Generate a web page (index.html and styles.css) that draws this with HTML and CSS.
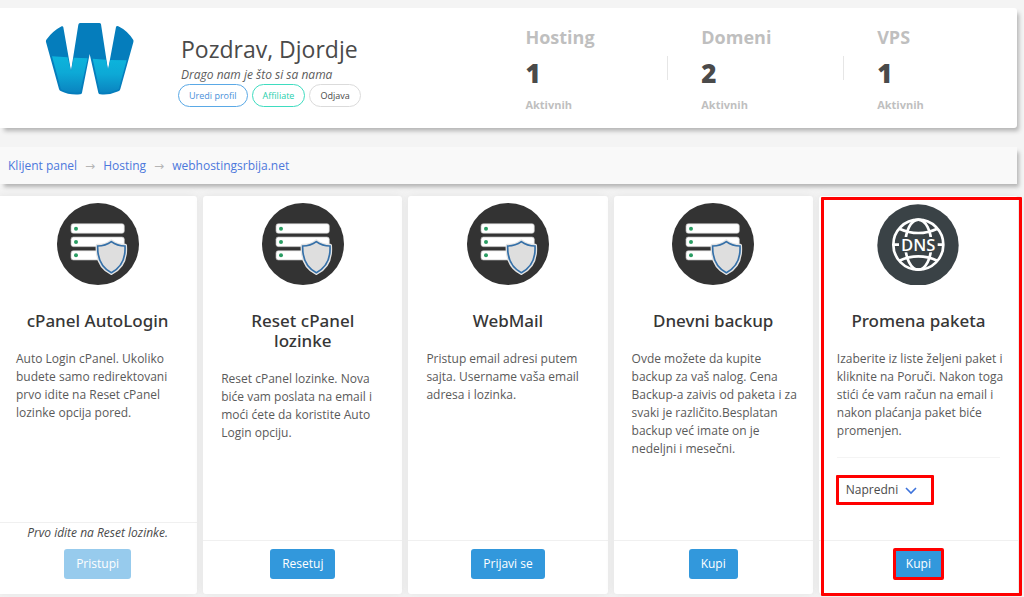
FILE: index.html
```html
<!DOCTYPE html>
<html lang="sr-Latn">
<head>
<meta charset="utf-8">
<meta name="viewport" content="width=device-width, initial-scale=1">
<title>Klijent panel</title>
<link rel="stylesheet" href="styles.css">
</head>
<body>
<svg class="defs" aria-hidden="true">
  <defs>
    <linearGradient id="water" x1="0" y1="0" x2="0" y2="1">
      <stop offset="0" stop-color="#0cb4dc"/>
      <stop offset=".45" stop-color="#0da9d6"/>
      <stop offset="1" stop-color="#0a84c0"/>
    </linearGradient>
    <symbol id="server" viewBox="20 15 246 246">
      <circle cx="143" cy="138" r="123" fill="#333"/>
      <g fill="#fff" stroke="#b5b5b5" stroke-width="2">
        <rect x="62" y="77" width="160" height="29" rx="7"/>
        <rect x="62" y="117" width="160" height="29" rx="7"/>
        <rect x="62" y="158" width="160" height="28" rx="7"/>
      </g>
      <g fill="#2a9d63"><circle cx="77" cy="92" r="6"/><circle cx="77" cy="132" r="6"/><circle cx="77" cy="172" r="6"/></g>
      <path d="M183 129C171 139 155 143 141 142C139 178 150 210 183 226C216 210 228 178 225 142C210 143 195 139 183 129Z" fill="#fff" stroke="#e4e4e4" stroke-width="10" stroke-linejoin="round"/>
      <path d="M183 131C171 140 155 144 142 144C141 178 152 208 183 224C214 208 226 178 224 144C210 144 195 140 183 131Z" fill="#dedede" stroke="#3570a8" stroke-width="5"/>
    </symbol>
  </defs>
</svg>
<main class="page">
  <header class="panel welcome">
    <svg class="logo" viewBox="0 0 300 270" role="img" aria-label="W">
      <path d="M120 24L178 24Q182 24 183 28L204 165L228 36Q230 31 235 34Q262 47 280 75Q281 78 280 82L241 222Q240 227 235 229Q209 241 181 238Q176 238 175 233L149 117L126 233Q125 238 120 238Q88 241 62 228Q58 226 57 222L18 81Q17 77 19 74Q38 48 65 34Q69 32 70 37L93 168L115 29Q116 24 120 24Z" fill="#057dbc"/>
      <path d="M36 124L83 127L93 168L101 128L143 130L120 232Q88 236 63 223Z" fill="url(#water)"/>
      <path d="M158 131L198 134L204 165L211 135L260 136L236 223Q208 236 180 232Z" fill="url(#water)"/>
    </svg>
    <div class="greeting">
      <h1>Pozdrav, Djordje</h1>
      <p>Drago nam je što si sa nama</p>
      <nav class="pills">
        <a class="pill blue" href="#">Uredi profil</a>
        <a class="pill green" href="#">Affiliate</a>
        <a class="pill" href="#">Odjava</a>
      </nav>
    </div>
    <div class="stats">
      <section class="stat"><h2>Hosting</h2><strong>1</strong><span>Aktivnih</span></section>
      <section class="stat"><h2>Domeni</h2><strong>2</strong><span>Aktivnih</span></section>
      <section class="stat"><h2>VPS</h2><strong>1</strong><span>Aktivnih</span></section>
    </div>
  </header>

  <nav class="panel crumbs">
    <a href="#">Klijent panel</a><span>→</span><a href="#">Hosting</a><span>→</span><a href="#">webhostingsrbija.net</a>
  </nav>

  <div class="cards">
    <article class="card">
      <svg class="icon"><use href="#server"/></svg>
      <h3>cPanel AutoLogin</h3>
      <p class="text">Auto Login cPanel. Ukoliko budete samo redirektovani prvo idite na Reset cPanel lozinke opcija pored.</p>
      <footer><em>Prvo idite na Reset lozinke.</em><button class="btn" disabled>Pristupi</button></footer>
    </article>
    <article class="card">
      <svg class="icon"><use href="#server"/></svg>
      <h3>Reset cPanel lozinke</h3>
      <p class="text">Reset cPanel lozinke. Nova biće vam poslata na email i moći ćete da koristite Auto Login opciju.</p>
      <footer><button class="btn">Resetuj</button></footer>
    </article>
    <article class="card">
      <svg class="icon"><use href="#server"/></svg>
      <h3>WebMail</h3>
      <p class="text">Pristup email adresi putem sajta. Username vaša email adresa i lozinka.</p>
      <footer><button class="btn">Prijavi se</button></footer>
    </article>
    <article class="card">
      <svg class="icon"><use href="#server"/></svg>
      <h3>Dnevni backup</h3>
      <p class="text">Ovde možete da kupite backup za vaš nalog. Cena Backup-a zaivis od paketa i za svaki je različito.Besplatan backup već imate on je nedeljni i mesečni.</p>
      <footer><button class="btn">Kupi</button></footer>
    </article>
    <article class="card marked">
      <svg class="icon" viewBox="22 15 246 246" role="img" aria-label="DNS">
        <circle cx="145" cy="141" r="122" fill="#3a4246"/>
        <g fill="none" stroke="#fff" stroke-width="8">
          <circle cx="146" cy="140" r="75"/>
          <ellipse cx="146" cy="140" rx="39" ry="75"/>
          <path d="M89 92Q146 118 203 92M89 188Q146 162 203 188M71 140H221"/>
        </g>
        <rect x="88" y="117" width="116" height="46" fill="#3a4246"/>
        <text class="dns" x="146" y="158" text-anchor="middle">DNS</text>
      </svg>
      <h3>Promena paketa</h3>
      <p class="text">Izaberite iz liste željeni paket i kliknite na Poruči. Nakon toga stići će vam račun na email i nakon plaćanja paket biće promenjen.</p>
      <div class="choice">
        <div class="picker">
          <select aria-label="Paket"><option>Napredni</option></select>
          <svg viewBox="0 0 12 8" aria-hidden="true"><path d="M1 1L6 6L11 1" fill="none" stroke="#3d73dc" stroke-width="1.6"/></svg>
        </div>
      </div>
      <footer><button class="btn outlined">Kupi</button></footer>
    </article>
  </div>
</main>
</body>
</html>
```
FILE: styles.css
```css
* { box-sizing: border-box; }

body {
  margin: 0;
  background: #f4f4f4;
  color: #4a4a4a;
  font-family: "Open Sans", "Noto Sans", sans-serif;
  font-size: 12px;
  line-height: 18px;
}

h1, h2, h3, p { margin: 0; }
a { text-decoration: none; }
.defs { position: absolute; width: 0; height: 0; }
.page { padding-top: 8px; overflow: hidden; }

.panel {
  margin-right: 7px;
  box-shadow: 3px 4px 4px -1px #b4b4b4;
}

.welcome {
  display: flex;
  align-items: flex-start;
  min-height: 120px;
  padding-left: 40px;
  background: #fff;
  border-radius: 0 3px 3px 0;
}
.logo { width: 100px; height: 90px; margin-top: 7px; flex: none; }

.greeting { margin: 24px 0 0 41px; flex: 1; }
.greeting h1 { color: #4a4a4a; font-size: 23px; font-weight: 400; line-height: 34px; }
.greeting p { color: #5c5c5c; font-style: italic; }

.pills { display: flex; gap: 4px; margin-left: -3px; }
.pill {
  padding: 0 10px;
  border: 1px solid #dbdbdb;
  border-radius: 12px;
  color: #4a4a4a;
  font-size: 9px;
  line-height: 21px;
}
.blue { border-color: #5aa9e6; color: #4a90d9; }
.green { border-color: #3fdcc0; color: #1fcfad; }

.stats { display: grid; grid-template-columns: repeat(3, 1fr); flex: 0 0 54%; }
.stat {
  position: relative;
  display: flex;
  flex-direction: column;
  padding: 17px 0 0 36px;
  color: #bfbfbf;
  font-weight: 700;
}
.stat h2 { font-size: 18px; line-height: 24px; }
.stat strong { color: #4a4a4a; font-size: 26px; line-height: 49px; }
.stat span { font-size: 11px; line-height: 14px; }
.stat + .stat::before {
  content: "";
  position: absolute;
  left: 2px;
  top: 48px;
  width: 1px;
  height: 24px;
  background: #e6e6e6;
}

.crumbs {
  display: flex;
  gap: 8px;
  margin-top: 19px;
  padding: 10px 8px 9px;
  background: #f9f9f9;
}
.crumbs a { color: #4c78dc; }
.crumbs span { color: #b5b5b5; font-family: "DejaVu Sans", sans-serif; }

.cards {
  display: grid;
  grid-template-columns: repeat(5, 1fr);
  gap: 6px;
  margin: 12px 6px 3px -2px;
}
.card {
  position: relative;
  display: flex;
  flex-direction: column;
  min-height: 398px;
  padding-top: 7px;
  background: #fff;
  border-radius: 3px;
  box-shadow: 0 0 10px #e2e2e2;
}
.icon { width: 82px; height: 82px; align-self: center; }
.card h3 {
  margin-top: 26px;
  padding: 0 24px;
  color: #363636;
  font-family: "Noto Sans", "Open Sans", sans-serif;
  font-size: 17px;
  font-weight: 500;
  line-height: 20px;
  text-align: center;
}
.text { padding: 19px 10px 0 18px; color: #5a5a5a; }
.card footer {
  display: flex;
  flex-direction: column;
  align-items: center;
  gap: 7px;
  margin-top: auto;
  padding: 8px 0 15px;
  border-top: 1px solid #f0f0f0;
}
.card footer:has(em) { padding-top: 1px; }
.btn {
  padding: 0 12px;
  border: 0;
  border-radius: 3px;
  background: #3298dc;
  color: #fff;
  font: inherit;
  line-height: 30px;
}
.btn:disabled { opacity: .5; }

.choice { margin: 17px 18px 0; padding-top: 17px; border-top: 1px solid #f4f4f4; }
.picker { position: relative; width: 98px; margin-left: -1px; }
.picker select {
  width: 100%;
  height: 30px;
  padding: 0 7px;
  appearance: none;
  border: 3px solid #f00;
  border-radius: 1px;
  background: #fff;
  color: #4a4a4a;
  font: inherit;
}
.picker svg { position: absolute; right: 17px; top: 12px; width: 12px; height: 8px; pointer-events: none; }

.marked::after {
  content: "";
  position: absolute;
  inset: 1px -4px -2px 2px;
  border: 3px solid #f00;
  border-radius: 1px;
  pointer-events: none;
}
.outlined { border-radius: 1px; outline: 3px solid #f00; outline-offset: -2px; }
.dns { fill: #fff; font-size: 50px; font-weight: 600; }
```
